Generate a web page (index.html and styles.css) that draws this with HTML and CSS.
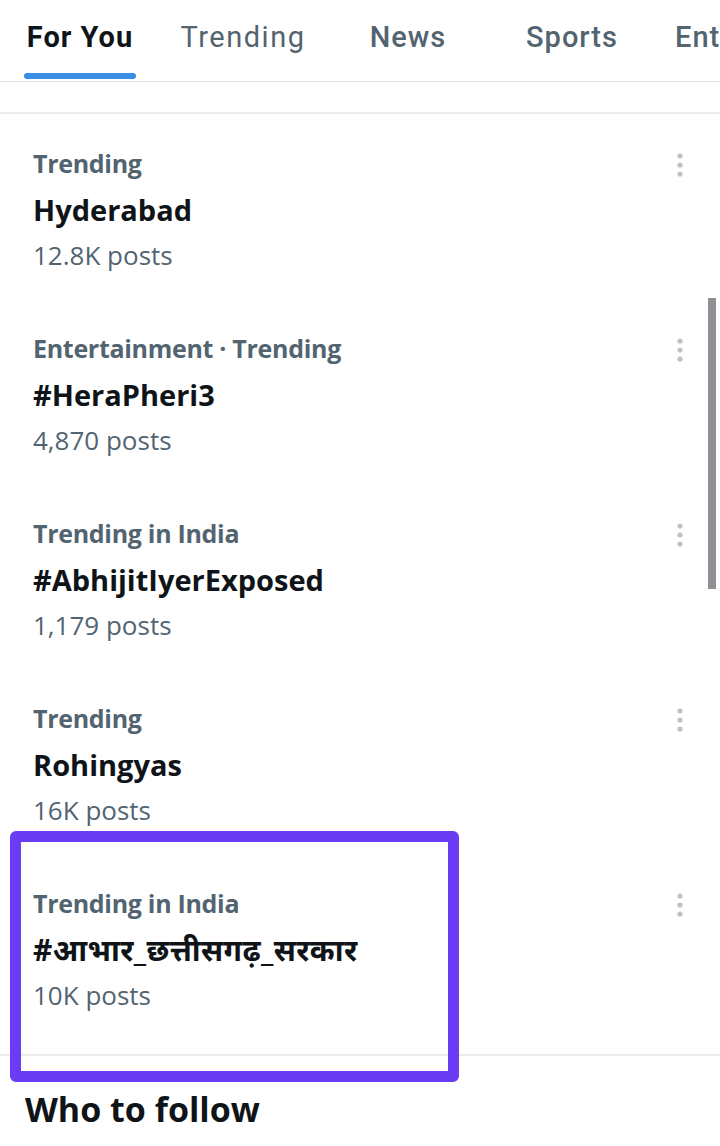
FILE: index.html
```html
<!DOCTYPE html>
<html lang="en">
<head>
  <meta charset="UTF-8">
  <meta name="viewport" content="width=device-width, initial-scale=1">
  <title>Explore - Trending</title>
  <link rel="stylesheet" href="styles.css">
</head>
<body>
  <nav class="tabs">
    <div class="tab active"><span class="tab-label">For You</span><span class="indicator"></span></div>
    <div class="tab light"><span class="tab-label">Trending</span></div>
    <div class="tab"><span class="tab-label">News</span></div>
    <div class="tab"><span class="tab-label">Sports</span></div>
    <div class="tab last"><span class="tab-label">Ent</span></div>
  </nav>

  <section class="trends">
    <div class="trend">
      <div class="trend-text">
        <div class="trend-meta">Trending</div>
        <div class="trend-title">Hyderabad</div>
        <div class="trend-count">12.8K posts</div>
      </div>
      <svg class="more" viewBox="0 0 6 24" width="6" height="24"><circle cx="3" cy="3" r="2.6"/><circle cx="3" cy="12" r="2.6"/><circle cx="3" cy="21" r="2.6"/></svg>
    </div>
    <div class="trend">
      <div class="trend-text">
        <div class="trend-meta">Entertainment · Trending</div>
        <div class="trend-title">#HeraPheri3</div>
        <div class="trend-count">4,870 posts</div>
      </div>
      <svg class="more" viewBox="0 0 6 24" width="6" height="24"><circle cx="3" cy="3" r="2.6"/><circle cx="3" cy="12" r="2.6"/><circle cx="3" cy="21" r="2.6"/></svg>
    </div>
    <div class="trend">
      <div class="trend-text">
        <div class="trend-meta">Trending in India</div>
        <div class="trend-title">#AbhijitIyerExposed</div>
        <div class="trend-count">1,179 posts</div>
      </div>
      <svg class="more" viewBox="0 0 6 24" width="6" height="24"><circle cx="3" cy="3" r="2.6"/><circle cx="3" cy="12" r="2.6"/><circle cx="3" cy="21" r="2.6"/></svg>
    </div>
    <div class="trend">
      <div class="trend-text">
        <div class="trend-meta">Trending</div>
        <div class="trend-title">Rohingyas</div>
        <div class="trend-count">16K posts</div>
      </div>
      <svg class="more" viewBox="0 0 6 24" width="6" height="24"><circle cx="3" cy="3" r="2.6"/><circle cx="3" cy="12" r="2.6"/><circle cx="3" cy="21" r="2.6"/></svg>
    </div>
    <div class="trend">
      <div class="trend-text">
        <div class="trend-meta">Trending in India</div>
        <div class="trend-title hindi">#आभार_छत्तीसगढ़_सरकार</div>
        <div class="trend-count">10K posts</div>
      </div>
      <svg class="more" viewBox="0 0 6 24" width="6" height="24"><circle cx="3" cy="3" r="2.6"/><circle cx="3" cy="12" r="2.6"/><circle cx="3" cy="21" r="2.6"/></svg>
    </div>
  </section>

  <h2 class="section-title">Who to follow</h2>

  <div class="highlight"></div>
  <div class="scrollbar"></div>
</body>
</html>
```

FILE: styles.css
```css
body {
  margin: 0;
  background: #fff;
  font-family: 'Open Sans', 'Noto Sans', sans-serif;
  color: #0f1419;
  overflow: hidden;
}
.tabs {
  display: flex;
  height: 81px;
  border-bottom: 1px solid #e2e4e6;
  overflow: hidden;
  font-family: Roboto, 'Noto Sans', sans-serif;
  font-size: 29px;
  letter-spacing: 1px;
  white-space: nowrap;
}
.tab {
  flex: 0 0 164px;
  display: flex;
  flex-direction: column;
  align-items: center;
  padding-top: 17px;
  color: #536471;
  font-weight: 500;
}
.tab-label {
  line-height: 40px;
}
.tab.active {
  flex-basis: 160px;
  color: #0f1419;
  font-weight: 700;
}
.tab.light {
  flex-basis: 166px;
  font-weight: 400;
  letter-spacing: 1.5px;
}
.tab.last {
  align-items: flex-start;
  padding-left: 21px;
}
.indicator {
  display: block;
  width: 112px;
  height: 6px;
  margin-top: 16px;
  border-radius: 3px;
  background: #3b8fe1;
}
.trends {
  margin-top: 30px;
  border-top: 2px solid #ececec;
  border-bottom: 2px solid #ececec;
  padding-top: 15px;
}
.trend {
  display: flex;
  justify-content: space-between;
  align-items: flex-start;
  height: 185px;
  box-sizing: border-box;
  padding: 16px 37px 0 33px;
}
.trend-meta {
  font-size: 25px;
  line-height: 36px;
  font-weight: 700;
  letter-spacing: -0.3px;
  color: #536471;
}
.trend-title {
  margin-top: 7px;
  font-size: 29px;
  line-height: 44px;
  font-weight: 700;
  color: #0f1419;
}
.trend-title.hindi {
  font-size: 30px;
  letter-spacing: 0.4px;
}
.trend-count {
  margin-top: 5px;
  font-size: 26px;
  line-height: 36px;
  color: #536471;
}
.more {
  margin-top: 8px;
  fill: #bcc3c8;
}
.section-title {
  margin: 31px 0 0 25px;
  font-size: 34px;
  line-height: 44px;
  font-weight: 700;
  color: #0f1419;
}
.highlight {
  position: absolute;
  left: 10px;
  top: 831px;
  width: 449px;
  height: 251px;
  box-sizing: border-box;
  border: 11px solid #6a3df4;
  border-radius: 6px;
}
.scrollbar {
  position: absolute;
  left: 708px;
  top: 298px;
  width: 8px;
  height: 291px;
  background: #8f9195;
}
```
